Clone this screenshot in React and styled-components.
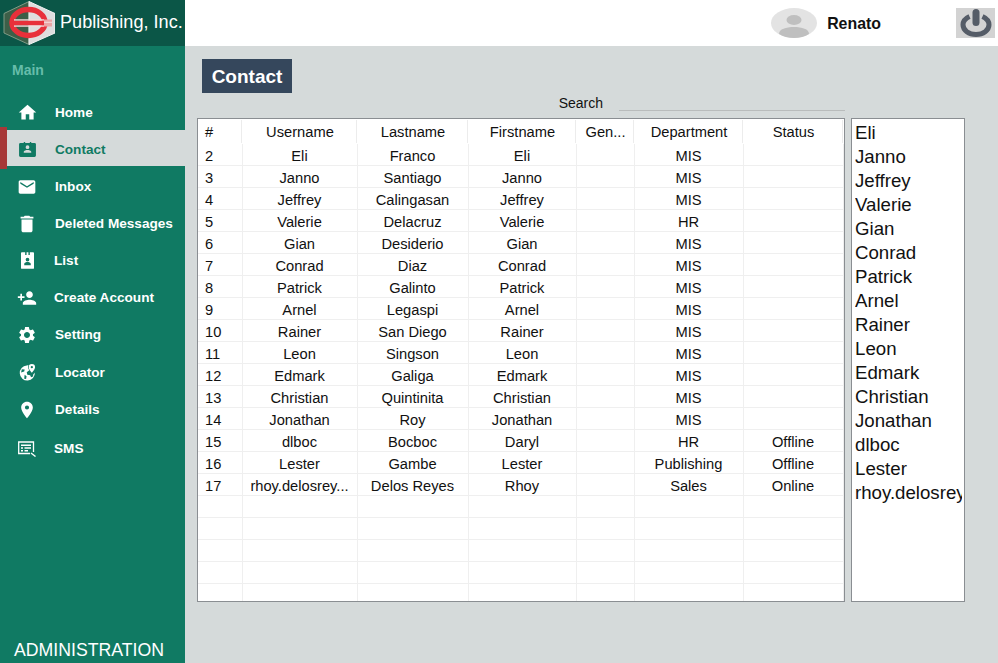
import React from "react";
import styled, { createGlobalStyle } from "styled-components";
import {
  MdHome,
  MdEmail,
  MdDelete,
  MdPersonAdd,
  MdSettings,
  MdPlace,
} from "react-icons/md";

const contacts = [
  ["2", "Eli", "Franco", "Eli", "", "MIS", ""],
  ["3", "Janno", "Santiago", "Janno", "", "MIS", ""],
  ["4", "Jeffrey", "Calingasan", "Jeffrey", "", "MIS", ""],
  ["5", "Valerie", "Delacruz", "Valerie", "", "HR", ""],
  ["6", "Gian", "Desiderio", "Gian", "", "MIS", ""],
  ["7", "Conrad", "Diaz", "Conrad", "", "MIS", ""],
  ["8", "Patrick", "Galinto", "Patrick", "", "MIS", ""],
  ["9", "Arnel", "Legaspi", "Arnel", "", "MIS", ""],
  ["10", "Rainer", "San Diego", "Rainer", "", "MIS", ""],
  ["11", "Leon", "Singson", "Leon", "", "MIS", ""],
  ["12", "Edmark", "Galiga", "Edmark", "", "MIS", ""],
  ["13", "Christian", "Quintinita", "Christian", "", "MIS", ""],
  ["14", "Jonathan", "Roy", "Jonathan", "", "MIS", ""],
  ["15", "dlboc", "Bocboc", "Daryl", "", "HR", "Offline"],
  ["16", "Lester", "Gambe", "Lester", "", "Publishing", "Offline"],
  ["17", "rhoy.delosrey...", "Delos Reyes", "Rhoy", "", "Sales", "Online"],
];

const columns = ["#", "Username", "Lastname", "Firstname", "Gen...", "Department", "Status"];
const columnWidths = [45, 115, 111, 108, 58, 109, 100];
const onlineNames = [
  "Eli", "Janno", "Jeffrey", "Valerie", "Gian", "Conrad", "Patrick", "Arnel",
  "Rainer", "Leon", "Edmark", "Christian", "Jonathan", "dlboc", "Lester", "rhoy.delosreyes",
];

const ContactIcon = () => (
  <svg viewBox="0 0 18 16" width="17" height="15">
    <path
      fill="currentColor"
      fillRule="evenodd"
      d="M1.500 1H5V0h1.500v1h5V0H13v1h3.500A1.500 1.500 0 0 1 18 2.500v12a1.500 1.500 0 0 1-1.500 1.500h-15A1.500 1.500 0 0 1 0 14.500v-12A1.500 1.500 0 0 1 1.500 1zM9 3.500a2 2 0 1 0 0 4 2 2 0 0 0 0-4zM5 11.500h8V10.300C13 9 10.500 8.500 9 8.500S5 9 5 10.300z"
    />
  </svg>
);

const BadgeIcon = () => (
  <svg viewBox="0 0 14 18" width="13" height="17">
    <path
      fill="currentColor"
      fillRule="evenodd"
      d="M1 0h3.500v3h1.500V0h2v3h1.500V0H13a1 1 0 0 1 1 1v16a1 1 0 0 1-1 1H1a1 1 0 0 1-1-1V1a1 1 0 0 1 1-1zM7 6a2 2 0 1 0 0 4 2 2 0 0 0 0-4zM3.500 14h7v-1.500C10.500 11.200 8.300 10.700 7 10.700s-3.500.5-3.500 1.800z"
    />
  </svg>
);

const LocatorIcon = () => (
  <svg viewBox="0 0 18 18" width="17" height="17">
    <path
      fill="currentColor"
      d="M8.200 1.500A8 8 0 1 0 16.800 9c-.5.700-1 1.300-1.600 1.900l-.4 2.400-2 .6-1-2-3-.5-.6-2.700 2-1.500.8-.5c-.9-1.200-1.500-2.400-1.500-3.500 0-.9.200-1.700.7-2.100zM3 5.500l3 .3-.5 2.200L2.200 9zm3 6l2 1.500-.5 3-2-.5z"
    />
    <path
      fill="currentColor"
      fillRule="evenodd"
      d="M13.600 0a3.400 3.400 0 0 0-3.400 3.400c0 2.300 3.400 5.800 3.400 5.800S17 5.700 17 3.400A3.400 3.400 0 0 0 13.600 0zm0 2.200a1.200 1.200 0 1 1 0 2.400 1.200 1.200 0 0 1 0-2.400z"
    />
  </svg>
);

const SmsIcon = () => (
  <svg viewBox="0 0 18 16" width="18" height="16">
    <path fill="none" stroke="currentColor" strokeWidth="1.300" d="M15.500 11V1H.7v11.500H12" />
    <path fill="currentColor" d="M3 3.500h10V5H3zM3 6.300h2v1.500H3zM6.500 6.300H13v1.500H6.500zM3 9h2v1.500H3zM6.500 9H10v1.500H6.500z" />
    <path fill="none" stroke="currentColor" strokeWidth="1.400" d="M13 12l4.500 3.500" />
  </svg>
);

const LogoMark = () => (
  <svg viewBox="0 0 52 44" width="52" height="44">
    <path d="M26 0.500L1 12.500v19.500L26 43.500z" fill="#3c5f48" stroke="#7f9a85" strokeWidth="1" />
    <path d="M26 0.500L52 12.500v19.500L26 43.500z" fill="#dedede" stroke="#f2f2f2" strokeWidth="1" />
    <ellipse cx="25.500" cy="21.500" rx="16.500" ry="13" fill="none" stroke="#e8303a" strokeWidth="5.500" />
    <path d="M11 18.200h30v1.600H11zM11 24.200h30v1.600H11z" fill="#f4dcdc" />
    <path d="M11 19.800h30v4.400H11z" fill="#e8303a" />
    <path d="M41 18.500h8v7h-8z" fill="#eaa5a5" />
    <path d="M41 20.800h8v.9h-8z" fill="#f6e6e6" />
  </svg>
);

const PowerIcon = () => (
  <svg viewBox="0 0 32 28" width="32" height="28">
    <path
      d="M9.500 7.500C5.500 9.300 3 12.300 3 15.800 3 21.300 8.800 25.500 16 25.500s13-4.200 13-9.700c0-3.500-2.500-6.500-6.500-8.300"
      fill="none"
      stroke="#555c67"
      strokeWidth="5"
    />
    <path d="M16 3.500v10" stroke="#555c67" strokeWidth="7" strokeLinecap="round" />
  </svg>
);

const AvatarIcon = () => (
  <svg viewBox="0 0 46 30" width="46" height="30">
    <ellipse cx="23" cy="15" rx="23" ry="15" fill="#e3e3e3" />
    <ellipse cx="23" cy="12" rx="7.500" ry="5" fill="#bfbfbf" />
    <path d="M8 26c0-5 7-7 15-7s15 2 15 7c-4 2.500-9 4-15 4S12 28.500 8 26z" fill="#bfbfbf" />
  </svg>
);

const navItems = [
  { label: "Home", icon: <MdHome size={21} /> },
  { label: "Contact", icon: <ContactIcon />, active: true },
  { label: "Inbox", icon: <MdEmail size={20} /> },
  { label: "Deleted Messages", icon: <MdDelete size={22} /> },
  { label: "List", icon: <BadgeIcon />, tight: true },
  { label: "Create Account", icon: <MdPersonAdd size={20} />, tight: true },
  { label: "Setting", icon: <MdSettings size={20} /> },
  { label: "Locator", icon: <LocatorIcon />, gap: 1 },
  { label: "Details", icon: <MdPlace size={20} /> },
  { label: "SMS", icon: <SmsIcon />, gap: 2, tight: true },
];

export default function App() {
  const blankRows = Array.from({ length: 6 });

  return (
    <Page>
      <GlobalStyle />
      <Sidebar>
        <Brand>
          <LogoMark />
          <BrandName>Publishing, Inc.</BrandName>
        </Brand>
        <SectionLabel>Main</SectionLabel>
        <NavList>
          {navItems.map((item) => (
            <NavItem key={item.label} $active={item.active} $gap={item.gap}>
              <NavIcon>{item.icon}</NavIcon>
              <NavText $tight={item.tight}>{item.label}</NavText>
            </NavItem>
          ))}
        </NavList>
        <SidebarFooter>ADMINISTRATION</SidebarFooter>
      </Sidebar>

      <Workspace>
        <TopBar>
          <UserBlock>
            <AvatarIcon />
            <UserName>Renato</UserName>
          </UserBlock>
          <PowerButton>
            <PowerIcon />
          </PowerButton>
        </TopBar>

        <Content>
          <PageTitle>Contact</PageTitle>
          <SearchRow>
            <SearchLabel>Search</SearchLabel>
            <SearchInput />
          </SearchRow>
          <Panels>
            <TableBox>
              <Grid>
                <colgroup>
                  {columnWidths.map((width, i) => (
                    <col key={i} width={width} />
                  ))}
                </colgroup>
                <thead>
                  <tr>
                    {columns.map((name, i) => (
                      <HeadCell key={name} $left={i === 0}>
                        {name}
                      </HeadCell>
                    ))}
                  </tr>
                </thead>
                <tbody>
                  {contacts.map((row) => (
                    <tr key={row[0]}>
                      {row.map((value, i) => (
                        <Cell key={i} $left={i === 0}>
                          {value}
                        </Cell>
                      ))}
                    </tr>
                  ))}
                  {blankRows.map((_, r) => (
                    <tr key={r}>
                      {columns.map((name) => (
                        <Cell key={name} />
                      ))}
                    </tr>
                  ))}
                </tbody>
              </Grid>
            </TableBox>
            <NameList>
              {onlineNames.map((name) => (
                <NameItem key={name}>{name}</NameItem>
              ))}
            </NameList>
          </Panels>
        </Content>
      </Workspace>
    </Page>
  );
}

const GlobalStyle = createGlobalStyle`
  html, body {
    margin: 0;
    padding: 0;
    height: 100%;
    overflow: hidden;
  }
  body {
    font-family: "Liberation Sans", Arial, sans-serif;
  }
`;

const Page = styled.div`
  display: flex;
  width: 998px;
  height: 663px;
  background-color: #d5dada;
`;

const Sidebar = styled.aside`
  width: 185px;
  flex-shrink: 0;
  display: flex;
  flex-direction: column;
  background-color: #107a63;
  color: white;
`;

const Brand = styled.div`
  height: 46px;
  display: flex;
  align-items: center;
  padding-left: 3px;
  background-color: #0b5647;
  overflow: hidden;
`;

const BrandName = styled.span`
  margin-left: 5px;
  padding-bottom: 2px;
  font-size: 18.1px;
  white-space: nowrap;
`;

const SectionLabel = styled.div`
  height: 47px;
  padding: 16px 0 0 12px;
  box-sizing: border-box;
  font-size: 14px;
  font-weight: bold;
  color: #66bdaa;
`;

const NavList = styled.nav`
  display: flex;
  flex-direction: column;
  gap: 1px;
`;

const NavItem = styled.div`
  position: relative;
  height: 36px;
  display: flex;
  align-items: center;
  padding-top: 3px;
  box-sizing: border-box;
  margin-top: ${(props) => props.$gap || 0}px;
  background-color: ${(props) => (props.$active ? "#d5dada" : "transparent")};
  color: ${(props) => (props.$active ? "#107a63" : "white")};

  ${(props) =>
    props.$active &&
    `
    &::before {
      content: "";
      position: absolute;
      left: 0;
      top: -3px;
      bottom: -3px;
      width: 7px;
      background-color: #a73838;
    }
  `}
`;

const NavIcon = styled.span`
  width: 54px;
  flex-shrink: 0;
  display: flex;
  justify-content: center;
`;

const NavText = styled.span`
  margin-left: ${(props) => (props.$tight ? "0" : "1px")};
  font-size: 13.6px;
  font-weight: bold;
  white-space: nowrap;
`;

const SidebarFooter = styled.div`
  margin-top: auto;
  padding: 0 0 3px 14px;
  font-size: 17.7px;
  line-height: 20px;
`;

const Workspace = styled.main`
  flex: 1;
  display: flex;
  flex-direction: column;
  min-width: 0;
`;

const TopBar = styled.header`
  height: 46px;
  flex-shrink: 0;
  display: flex;
  align-items: center;
  justify-content: flex-end;
  padding: 0 3px 0 0;
  box-sizing: border-box;
  background-color: white;
`;

const UserBlock = styled.div`
  display: flex;
  align-items: center;
  gap: 10px;
  margin-right: 75px;
`;

const UserName = styled.span`
  padding-top: 2px;
  font-size: 15.9px;
  font-weight: bold;
  color: #111;
`;

const PowerButton = styled.div`
  width: 39px;
  height: 30px;
  display: flex;
  align-items: center;
  justify-content: center;
  background-color: #d3d3d3;
`;

const Content = styled.div`
  padding: 13px 0 0 12px;
`;

const PageTitle = styled.h1`
  width: 90px;
  height: 34px;
  margin: 0 0 0 5px;
  padding-top: 2px;
  box-sizing: border-box;
  display: flex;
  align-items: center;
  justify-content: center;
  background-color: #35475c;
  color: white;
  font-size: 19px;
  font-weight: bold;
`;

const SearchRow = styled.div`
  width: 648px;
  height: 16px;
  margin-top: 2px;
  display: flex;
  justify-content: flex-end;
  align-items: stretch;
`;

const SearchLabel = styled.label`
  margin-right: 16px;
  font-size: 14px;
  line-height: 16px;
  color: #111;
`;

const SearchInput = styled.input`
  width: 226px;
  height: 16px;
  padding: 0;
  box-sizing: border-box;
  border: none;
  border-bottom: 1px solid #b9bcbc;
  background: transparent;
`;

const Panels = styled.div`
  display: flex;
  gap: 6px;
  margin-top: 7px;
`;

const TableBox = styled.div`
  width: 648px;
  height: 484px;
  box-sizing: border-box;
  border: 1px solid #8a8e92;
  background-color: white;
  overflow: hidden;
`;

const Grid = styled.table`
  width: 646px;
  table-layout: fixed;
  border-collapse: separate;
  border-spacing: 0;
  font-size: 14.7px;
  color: #111;
`;

const HeadCell = styled.th`
  position: relative;
  height: 25px;
  padding: 0 ${(props) => (props.$left ? "0 0 7px" : "1px 0 0")};
  box-sizing: border-box;
  font-weight: normal;
  text-align: ${(props) => (props.$left ? "left" : "center")};

  &::after {
    content: "";
    position: absolute;
    right: 1px;
    top: 1px;
    bottom: 1px;
    width: 1px;
    background-color: #ececec;
  }
`;

const Cell = styled.td`
  height: 22px;
  padding: 2px ${(props) => (props.$left ? "0 0 7px" : "1px 0 0")};
  box-sizing: border-box;
  border-right: 1px solid #efefef;
  border-bottom: 1px solid #efefef;
  text-align: ${(props) => (props.$left ? "left" : "center")};
  white-space: nowrap;
  overflow: hidden;
`;

const NameList = styled.ul`
  width: 114px;
  height: 484px;
  margin: 0;
  padding: 2px 2px 0 3px;
  box-sizing: border-box;
  border: 1px solid #8a8e92;
  background-color: white;
  list-style: none;
`;

const NameItem = styled.li`
  height: 24px;
  font-size: 18.67px;
  line-height: 24px;
  color: #111;
  white-space: nowrap;
  overflow: hidden;
`;
